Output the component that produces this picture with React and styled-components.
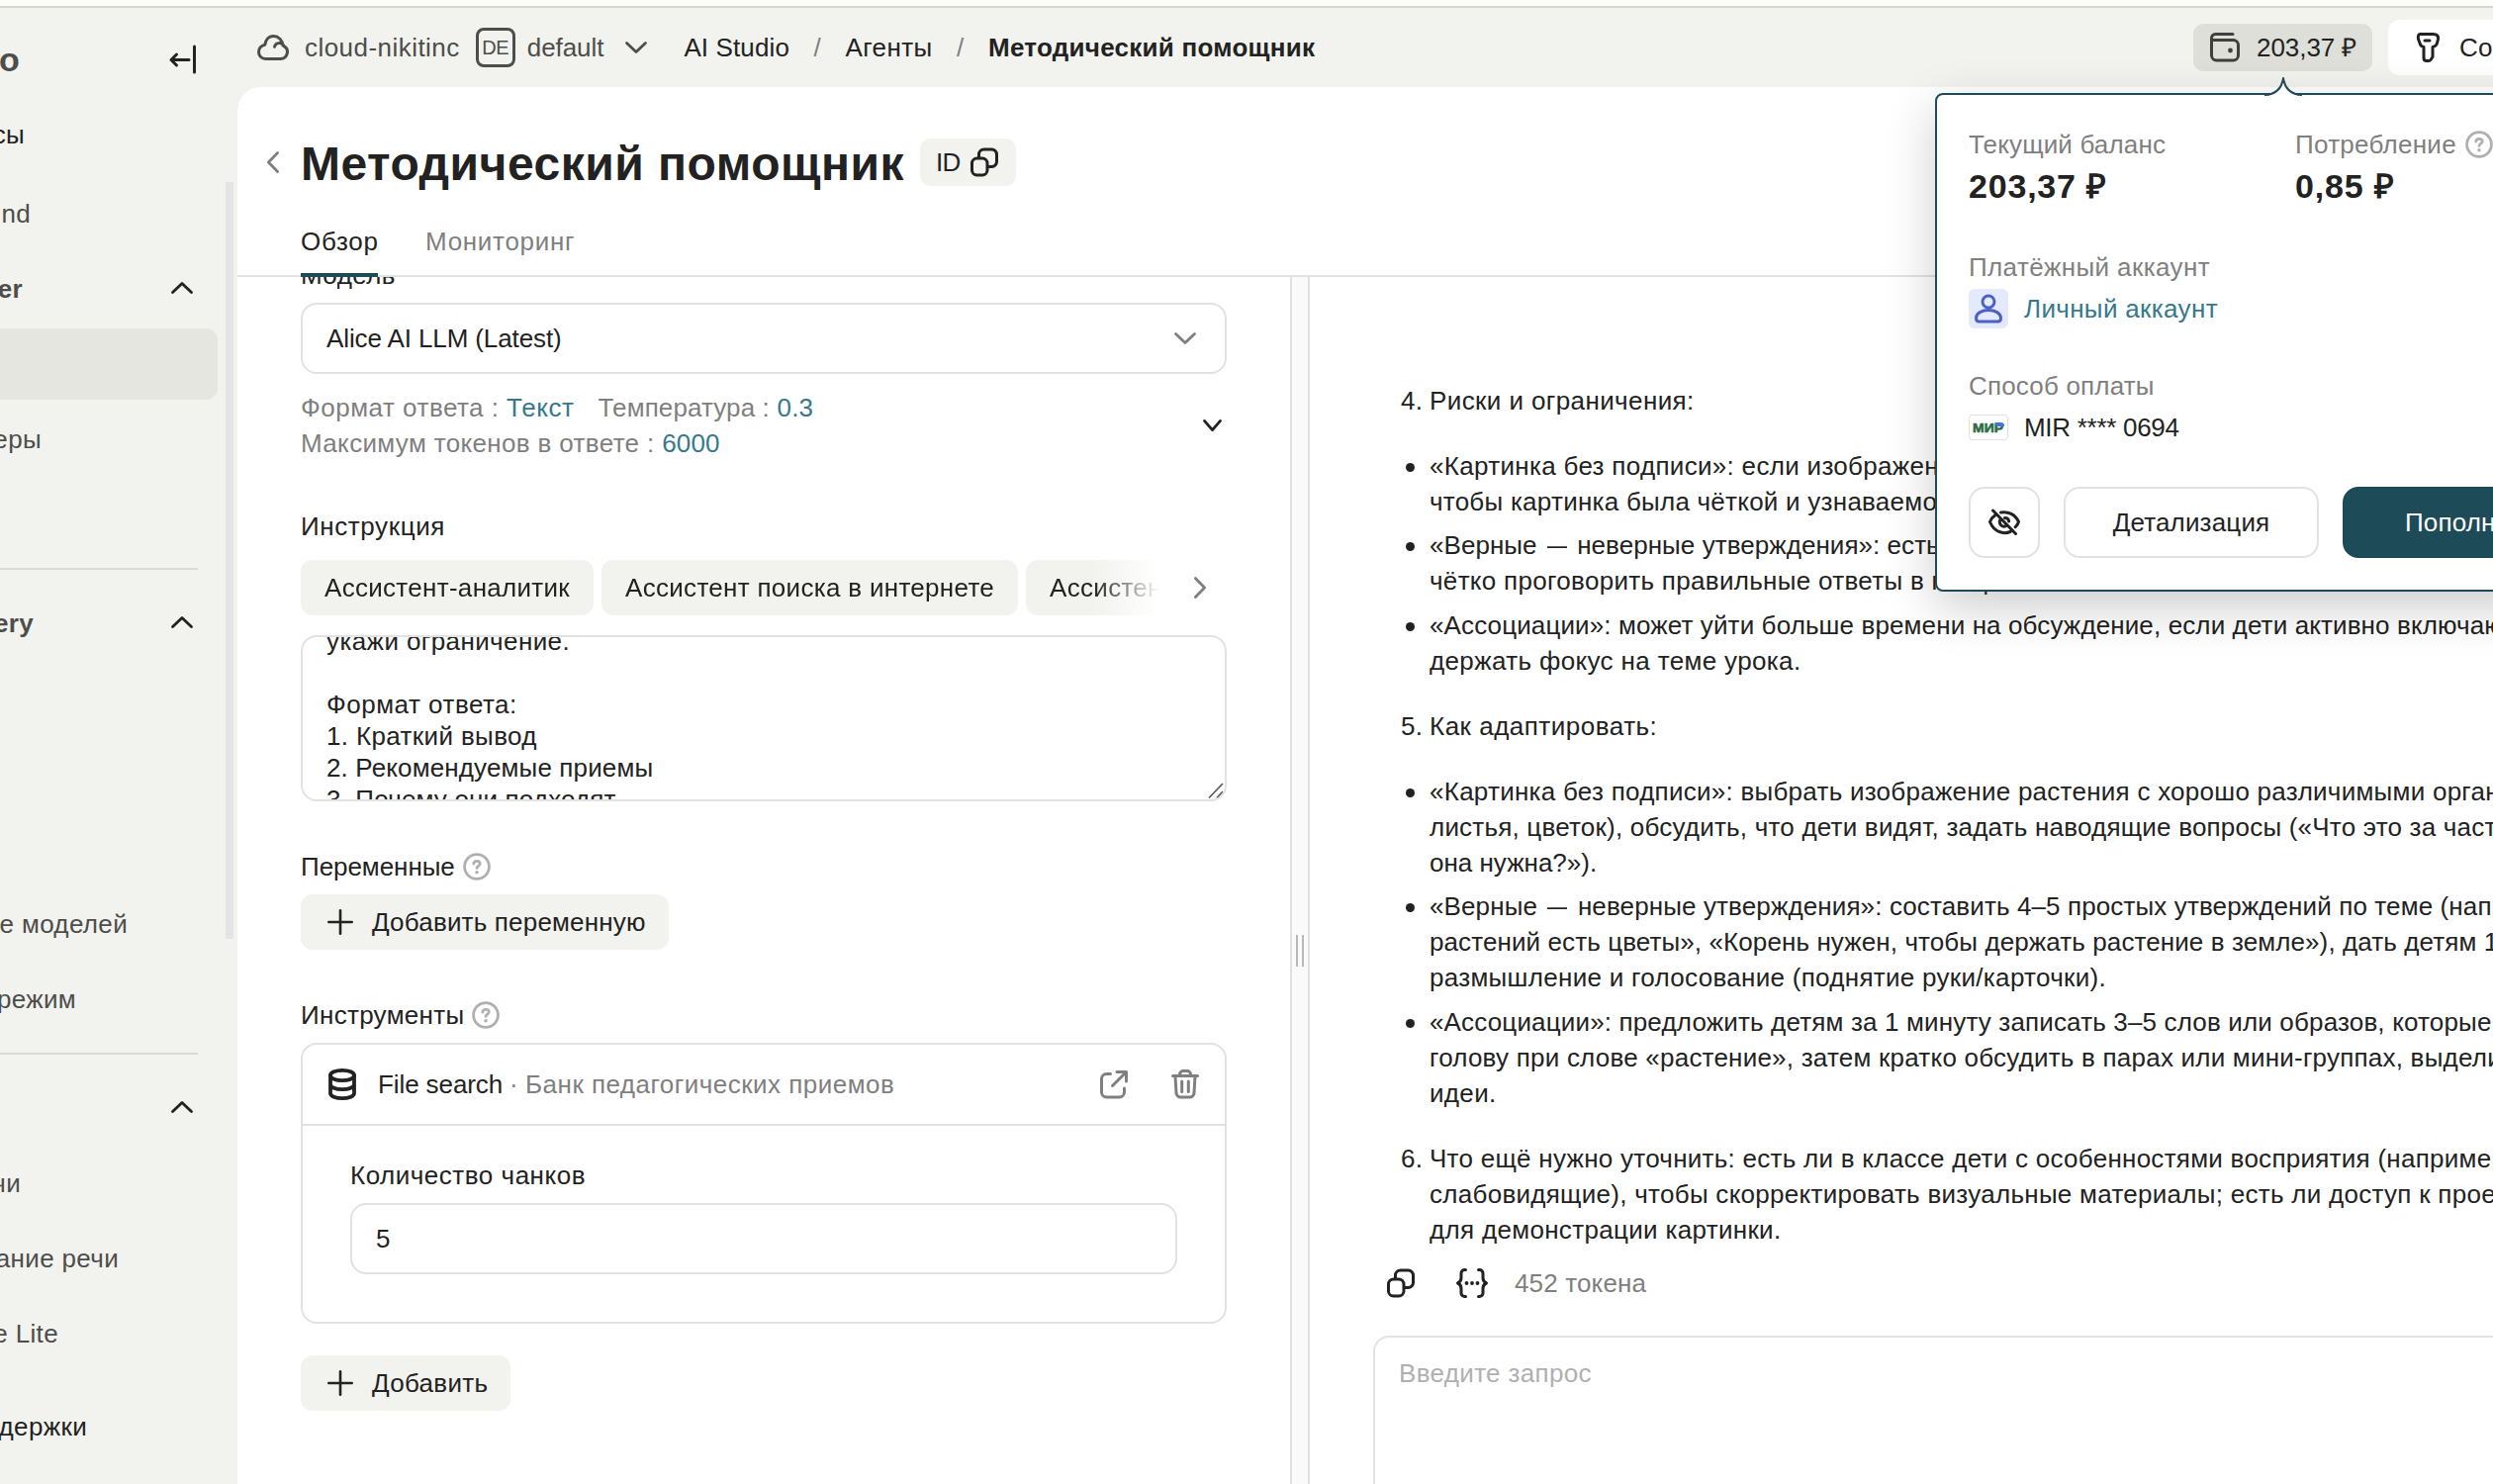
import React from "react";
import styled, { createGlobalStyle, css } from "styled-components";

const GlobalStyle = createGlobalStyle`
    * {
        box-sizing: border-box;
    }
    body {
        margin: 0;
        overflow: hidden;
        background: #f2f3ee;
        color: #222222;
        font-family: "Liberation Sans", Arial, sans-serif;
        font-size: 26px;
        line-height: 36px;
        letter-spacing: 0.34px;
    }
    svg {
        display: block;
        flex: none;
        overflow: visible;
    }
`;

// Icons
const Icon = ({ size = 32, color = "currentColor", stroke = 3, children }) => (
    <svg width={size} height={size} viewBox="0 0 32 32" fill="none" stroke={color} strokeWidth={stroke} strokeLinecap="round" strokeLinejoin="round">
        {children}
    </svg>
);

const Chevron = ({ dir = "down", size = 20, color = "currentColor", stroke = 2.8 }) => {
    const turn = { down: 0, left: 90, up: 180, right: 270 }[dir];
    const side = dir === "left" || dir === "right";
    const w = side ? 12 : size;
    const h = side ? size : 12;
    const half = (size - 3) / 2;
    return (
        <svg width={w} height={h} viewBox={`${-w / 2} ${-h / 2} ${w} ${h}`} fill="none" stroke={color} strokeWidth={stroke} strokeLinecap="round" strokeLinejoin="round">
            <path transform={`rotate(${turn})`} d={`M${-half} -4.6 L0 4.6 L${half} -4.6`} />
        </svg>
    );
};

const CopyIcon = () => (
    <Icon>
        <rect x="3.5" y="12" width="15.5" height="17" rx="5" />
        <path d="M10.5 11.5V8a5 5 0 0 1 5-5h8a5 5 0 0 1 5 5v7.500a5 5 0 0 1-5 5h-4" />
    </Icon>
);

const HelpIcon = () => (
    <Icon size={28} color="#b0b0b0" stroke={3.2}>
        <circle cx="16" cy="16" r="14.2" />
        <path d="M12.3 12.6c.2-2 1.7-3.1 3.7-3.1s3.7 1.200 3.700 3.100c0 2.700-3.700 2.700-3.700 5" />
        <circle cx="16" cy="22.600" r="2" fill="#b0b0b0" stroke="none" />
    </Icon>
);

const PlusIcon = () => (
    <Icon size={26} stroke={3.2}>
        <path d="M16 1.600v28.800M1.600 16h28.800" />
    </Icon>
);

// Data: every line is [text, letter spacing]
const replyBlocks = [
    {
        marker: "4.",
        title: [["Риски и ограничения:", 0.4]],
        items: [
            [["«Картинка без подписи»: если изображение нечёткое,", 0.31], ["чтобы картинка была чёткой и узнаваемой.", 0.25]],
            [["«Верные — неверные утверждения»: есть риск,", 0.05], ["чётко проговорить правильные ответы в конце.", 0.31]],
            [["«Ассоциации»: может уйти больше времени на обсуждение, если дети активно включаются,", 0.12], ["держать фокус на теме урока.", 0.36]]
        ]
    },
    {
        marker: "5.",
        title: [["Как адаптировать:", 0.5]],
        items: [
            [["«Картинка без подписи»: выбрать изображение растения с хорошо различимыми органами", 0.26], ["листья, цветок), обсудить, что дети видят, задать наводящие вопросы («Что это за часть", 0.21], ["она нужна?»).", 0]],
            [["«Верные — неверные утверждения»: составить 4–5 простых утверждений по теме (например,", 0.12], ["растений есть цветы», «Корень нужен, чтобы держать растение в земле»), дать детям 1", 0.1], ["размышление и голосование (поднятие руки/карточки).", 0.3]],
            [["«Ассоциации»: предложить детям за 1 минуту записать 3–5 слов или образов, которые", 0.16], ["голову при слове «растение», затем кратко обсудить в парах или мини-группах, выделить", 0.22], ["идеи.", 0.33]]
        ]
    },
    {
        marker: "6.",
        title: [["Что ещё нужно уточнить: есть ли в классе дети с особенностями восприятия (например,", 0.27], ["слабовидящие), чтобы скорректировать визуальные материалы; есть ли доступ к проектору", 0.28], ["для демонстрации картинки.", 0.32]],
        items: []
    }
];

const Lines = ({ rows }) => rows.map(([text, track]) => {
    const [before, after] = text.split("—");
    return (
        <Line key={text} $track={track}>
            {before}
            {after && <Dash>—</Dash>}
            {after}
        </Line>
    );
});

const Sidebar = () => (
    <SidebarWrap>
        <SidebarHead>
            <Logo $edge={20}>o</Logo>
            <svg width="27" height="30" viewBox="0 0 27 30" fill="none" stroke="#222222" strokeWidth="3" strokeLinecap="round" strokeLinejoin="round">
                <path d="M20 15.500H2M7.500 10l-5.500 5.500 5.500 5.500M25.500 2v26" />
            </svg>
        </SidebarHead>
        <SideRow>
            <SideText $edge={25} $dark>сы</SideText>
        </SideRow>
        <SideScroll>
            <SideNav>
                <SideRow>
                    <SideText $edge={31}>nd</SideText>
                </SideRow>
                <SideRow>
                    <SideText $edge={23} $bold>er</SideText>
                    <Chevron dir="up" size={22} />
                </SideRow>
                <SideRow $active />
                <SideRow>
                    <SideText $edge={42}>еры</SideText>
                </SideRow>
                <SideRow />
                <SideDivider />
                <SideRow>
                    <SideText $edge={34} $bold>ery</SideText>
                    <Chevron dir="up" size={22} />
                </SideRow>
                <SideRow />
                <SideRow />
                <SideRow />
                <SideRow>
                    <SideText $edge={129}>е моделей</SideText>
                </SideRow>
                <SideRow>
                    <SideText $edge={77}>режим</SideText>
                </SideRow>
                <SideDivider />
                <SideRow>
                    <SideText $edge={0} />
                    <Chevron dir="up" size={22} />
                </SideRow>
                <SideRow>
                    <SideText $edge={21}>чи</SideText>
                </SideRow>
                <SideRow>
                    <SideText $edge={120}>ание речи</SideText>
                </SideRow>
                <SideRow>
                    <SideText $edge={59}>е Lite</SideText>
                </SideRow>
                <SideFooter>
                    <SideText $edge={88} $dark>держки</SideText>
                </SideFooter>
            </SideNav>
            <ScrollThumb />
        </SideScroll>
    </SidebarWrap>
);

const Header = () => (
    <HeaderBar>
        <Cloud>
            <svg width="32" height="26" viewBox="0 0 32 26" fill="none" stroke="#4d4d4b" strokeWidth="3" strokeLinecap="round" strokeLinejoin="round">
                <path d="M8.500 24.500h15a7 7 0 0 0 3.200-13.200c-.200-1.800-2.700-3.200-5.200-2.700-2.200.4-3.600 1.700-4 3.600M26 11C25.500 5.500 21.500 1.500 16.500 1.500 11.500 1.500 8.500 5.500 7.800 10.200 4 11 1.500 14 1.500 17.500a7 7 0 0 0 7 7" />
            </svg>
            <Text $track={0.46}>cloud-nikitinc</Text>
        </Cloud>
        <Folder>
            <FolderBadge>DE</FolderBadge>
            <Text $track={-0.06}>default</Text>
        </Folder>
        <Chevron size={22} color="#4d4d4b" />
        <Crumbs>
            <Text $track={0.12}>AI Studio</Text>
            <Slash>/</Slash>
            <Text $track={0.4}>Агенты</Text>
            <Slash>/</Slash>
            <Current>Методический помощник</Current>
        </Crumbs>
        <HeaderActions>
            <BalanceButton>
                <Icon color="#3f3f3d">
                    <path d="M2.500 7v17a5 5 0 0 0 5 5h17a5 5 0 0 0 5-5V13.500a5 5 0 0 0-5-5H4.500a2 2 0 0 1-2-2c0-2 1.500-4 4-4H24" />
                    <circle cx="21.500" cy="19" r="2.400" fill="#3f3f3d" stroke="none" />
                </Icon>
                <Text $track={-0.04}>203,37 ₽</Text>
            </BalanceButton>
            <CreateButton>
                <Icon>
                    <path d="M9.500 2.500h13c4 0 5.500 2 5 5l-1 4c-.6 2.500-2 3.500-4.500 4V25.500l-2 3c-.5.700-1 1-2 1h-2c-2 0-3-1-3-3V15.500c-2.500-.5-3.500-1.500-4-4l-1.500-4c-.7-3 .3-5 2-5ZM14 9h5" transform="translate(-1 0)" />
                </Icon>
                <span>Создать</span>
            </CreateButton>
        </HeaderActions>
    </HeaderBar>
);

const Settings = () => (
    <SettingsColumn>
        <Label>Модель</Label>
        <Select>
            <Text $track={-0.11}>Alice AI LLM (Latest)</Text>
            <Chevron size={22} color="#7f7f7f" />
        </Select>
        <Params>
            <div>
                <ParamLine>
                    <Param $track={0.5}>Формат ответа :</Param> <ParamValue $track={0.6}>Текст</ParamValue>
                    <Param $track={0.11} $gap>Температура :</Param> <ParamValue>0.3</ParamValue>
                </ParamLine>
                <ParamLine>
                    <Param $track={0.35}>Максимум токенов в ответе :</Param> <ParamValue>6000</ParamValue>
                </ParamLine>
            </div>
            <Chevron size={19} />
        </Params>
        <Label $top={48} $track={0.6}>Инструкция</Label>
        <ChipRow>
            <ChipStrip>
                <Chip>Ассистент-аналитик</Chip>
                <Chip>Ассистент поиска в интернете</Chip>
                <Chip>Ассистент</Chip>
            </ChipStrip>
            <Chevron dir="right" size={22} color="#7f7f7f" />
        </ChipRow>
        <Instruction>
            <InstructionText>
                <Text $track={0.4}>укажи ограничение.</Text>
                <br />
                <br />
                <Text $track={0.5}>Формат ответа:</Text>
                <br />
                <Text $track={0.36}>1. Краткий вывод</Text>
                <br />
                <Text $track={0.14}>2. Рекомендуемые приемы</Text>
                <br />
                <Text $track={0.15}>3. Почему они подходят</Text>
            </InstructionText>
            <Grip width="16" height="16" viewBox="0 0 16 16" fill="none" stroke="#555555" strokeWidth="1.600">
                <path d="M1 15.500L15 1M9 15.500L15 9" />
            </Grip>
        </Instruction>
        <Label $top={48} $track={-0.05}>
            Переменные
            <HelpIcon />
        </Label>
        <AddButton $top={10}>
            <PlusIcon />
            <Text $track={0.19}>Добавить переменную</Text>
        </AddButton>
        <Label $top={48} $track={0.3}>
            Инструменты
            <HelpIcon />
        </Label>
        <Card>
            <CardHead>
                <Icon stroke={3.8}>
                    <ellipse cx="16" cy="7" rx="12" ry="5.200" />
                    <path d="M4 7v18c0 3 5.400 5.200 12 5.200S28 28 28 25V7M4 16c0 3 5.400 5.200 12 5.200S28 19 28 16" />
                </Icon>
                <ToolName>
                    <Text $track={-0.1}>File search</Text>
                    <Dot>·</Dot>
                    <Muted $track={0.48}>Банк педагогических приемов</Muted>
                </ToolName>
                <ToolActions>
                    <Icon color="#7f7f7f">
                        <path d="M12.500 5.500H8.500a5 5 0 0 0-5 5v13.500a5 5 0 0 0 5 5h13a5 5 0 0 0 5-5v-4M19 3.500h9.500v9.500M28 4L14.500 17.500" />
                    </Icon>
                    <Icon color="#7f7f7f">
                        <path d="M3.500 7.500h25M10.500 7V6a3.500 3.500 0 0 1 3.500-3.500h4A3.500 3.500 0 0 1 21.500 6v1M6 8l1 17a4.500 4.500 0 0 0 4.500 4h9a4.500 4.500 0 0 0 4.500-4l1-17M12.700 13v10.500M19.300 13v10.500" />
                    </Icon>
                </ToolActions>
            </CardHead>
            <CardBody>
                <Label $track={0.52}>Количество чанков</Label>
                <NumberInput>5</NumberInput>
            </CardBody>
        </Card>
        <AddButton $top={32}>
            <PlusIcon />
            <Text $track={0.3}>Добавить</Text>
        </AddButton>
    </SettingsColumn>
);

const Chat = () => (
    <ChatColumn>
        {replyBlocks.map((block) => (
            <Block key={block.marker}>
                <Entry>
                    <span>{block.marker}</span>
                    <div>
                        <Lines rows={block.title} />
                    </div>
                </Entry>
                {block.items.length > 0 && (
                    <Bullets>
                        {block.items.map((item) => (
                            <Entry key={item[0][0]}>
                                <Bullet />
                                <div>
                                    <Lines rows={item} />
                                </div>
                            </Entry>
                        ))}
                    </Bullets>
                )}
            </Block>
        ))}
        <ReplyActions>
            <CopyIcon />
            <Icon>
                <path d="M9.500 2.500H8.500a3.500 3.500 0 0 0-3.500 3.500v4.500c0 3-1 4.500-3.500 5.500 2.500 1 3.500 2.500 3.500 5.500V26a3.500 3.500 0 0 0 3.500 3.500h1M22.500 2.500h1A3.500 3.500 0 0 1 27 6v4.500c0 3 1 4.500 3.500 5.500-2.500 1-3.500 2.500-3.500 5.500V26a3.500 3.500 0 0 1-3.500 3.500h-1" />
                <path d="M10.500 16h.010M16 16h.010M21.500 16h.010" strokeWidth="3.800" />
            </Icon>
            <Muted $track={0.15}>452 токена</Muted>
        </ReplyActions>
        <Prompt>Введите запрос</Prompt>
    </ChatColumn>
);

const BalancePopover = () => (
    <Popover>
        <Arrow width="40" height="22" viewBox="0 0 40 22">
            <path d="M0 20H40V22H0Z" fill="#ffffff" />
            <path d="M1 19C13 18.500 18.500 12 20 2C21.500 12 27 18.500 39 19V21.500H1Z" fill="#ffffff" />
            <path d="M1 19C13 18.500 18.500 12 20 2C21.500 12 27 18.500 39 19" fill="none" stroke="#1e4b58" strokeWidth="2" strokeLinejoin="round" />
        </Arrow>
        <Totals>
            <div>
                <Muted $track={0.15}>Текущий баланс</Muted>
                <Amount>203,37 ₽</Amount>
            </div>
            <div>
                <Muted $track={0.28}>
                    Потребление
                    <HelpIcon />
                </Muted>
                <Amount>0,85 ₽</Amount>
            </div>
        </Totals>
        <Section $top={42}>
            <Muted $track={0.38}>Платёжный аккаунт</Muted>
            <SectionRow $link>
                <AccountBadge>
                    <Icon color="#4a62c4">
                        <circle cx="16" cy="9" r="6" />
                        <path d="M3.500 25.500c0-5 6-8 12.500-8s12.500 3 12.500 8c0 2.500-1 3.500-3 3.500h-19c-2 0-3-1-3-3.500Z" />
                    </Icon>
                </AccountBadge>
                <span>Личный аккаунт</span>
            </SectionRow>
        </Section>
        <Section $top={40}>
            <Muted $track={0.18}>Способ оплаты</Muted>
            <SectionRow>
                <CardBadge>
                    <svg width="32" height="12" viewBox="0 0 32 12">
                        <text x="0" y="10.500" fontFamily="Liberation Sans, sans-serif" fontWeight="700" fontSize="13" letterSpacing="0" textLength="31" lengthAdjust="spacingAndGlyphs" fill="#2d6b46" stroke="#2d6b46" strokeWidth="0.600">МИР</text>
                        <path d="M22.500 1H28.500C31 1 32.500 2.800 31.800 5H26.500C24.500 5 23 3.500 22.500 1Z" fill="#3b78e0" />
                    </svg>
                </CardBadge>
                <Text $track={-0.29}>MIR **** 0694</Text>
            </SectionRow>
        </Section>
        <PopoverButtons>
            <Button $width={72}>
                <Icon>
                    <path d="M4.500 4L27.500 27.500M12.500 6C20 4.500 27 8 30.500 15.500C29.800 17.500 28.600 19.300 27.200 20.700M7 8.500C4.500 10.300 2.600 12.600 1.500 15.500C5.500 25.500 15 28.500 22 25.500M16.500 11.500C19 11.500 20.500 13 20.700 15M11.800 13.500C10 17.500 14 21.700 18 19.500" />
                </Icon>
            </Button>
            <Button $width={258}>Детализация</Button>
            <Button $width={258} $primary>Пополнить</Button>
        </PopoverButtons>
    </Popover>
);

const App = () => (
    <>
        <GlobalStyle />
        <Page>
            <TopStrip />
            <Shell>
                <Sidebar />
                <Main>
                    <Header />
                    <Panel>
                        <PanelHead>
                            <TitleRow>
                                <Chevron dir="left" size={22} color="#7f7f7f" />
                                <Title>Методический помощник</Title>
                                <IdBadge>
                                    <Text $track={-0.7}>ID</Text>
                                    <CopyIcon />
                                </IdBadge>
                            </TitleRow>
                            <Tabs>
                                <Tab $active>Обзор</Tab>
                                <Tab>Мониторинг</Tab>
                            </Tabs>
                        </PanelHead>
                        <Content>
                            <Settings />
                            <Splitter>
                                <SplitterHandle />
                            </Splitter>
                            <Chat />
                        </Content>
                    </Panel>
                </Main>
            </Shell>
            <BalancePopover />
        </Page>
    </>
);

// Shell
const Page = styled.div`
    position: relative;
    display: flex;
    flex-direction: column;
    width: 100vw;
    height: 100vh;
    overflow: hidden;
`;

const TopStrip = styled.div`
    flex: none;
    height: 8px;
    background: #fffefa;
    border-bottom: 2px solid #d6d7cd;
`;

const Shell = styled.div`
    flex: 1;
    min-height: 0;
    display: grid;
    grid-template-columns: 240px minmax(0, 1fr);
`;

const Main = styled.div`
    display: flex;
    flex-direction: column;
    min-height: 0;
`;

const Text = styled.span`
    white-space: pre;
    letter-spacing: ${(p) => p.$track ?? 0.34}px;
`;

const Muted = styled.div`
    display: flex;
    align-items: center;
    gap: 9px;
    color: #7f7f7f;
    white-space: pre;
    letter-spacing: ${(p) => p.$track ?? 0.34}px;
`;

// Sidebar
const SidebarWrap = styled.aside`
    display: flex;
    flex-direction: column;
    min-height: 0;
    overflow: hidden;
`;

const SidebarHead = styled.div`
    display: flex;
    align-items: center;
    justify-content: space-between;
    height: 90px;
    padding: 13px 42px 0 0;
`;

const Logo = styled.div`
    display: flex;
    justify-content: flex-end;
    width: ${(p) => p.$edge}px;
    color: #4d4d4b;
    font-size: 34px;
    font-weight: 700;
`;

const SideScroll = styled.div`
    flex: 1;
    min-height: 0;
    display: flex;
    justify-content: space-between;
    padding: 4px 4px 0 0;
`;

const SideNav = styled.nav`
    width: 220px;
`;

const SideRow = styled.div`
    display: flex;
    align-items: center;
    justify-content: space-between;
    height: 76px;
    padding-right: 25px;

    svg {
        margin-top: -3px;
    }
    ${(p) => p.$active && css`
        height: 72px;
        margin: 2px 0;
        border-radius: 0 12px 12px 0;
        background: #e5e6e0;
    `}
`;

const SideText = styled.span`
    display: flex;
    justify-content: flex-end;
    width: ${(p) => p.$edge}px;
    white-space: pre;
    color: ${(p) => (p.$dark ? "#222222" : "#4d4d4b")};
    font-weight: ${(p) => (p.$bold ? 700 : 400)};
`;

const SideDivider = styled.div`
    width: 200px;
    height: 2px;
    margin: 16px 0;
    background: #d9dad4;
`;

const SideFooter = styled(SideRow)`
    margin-top: 18px;
`;

const ScrollThumb = styled.div`
    width: 8px;
    height: 765px;
    margin-top: 6px;
    background: #e4e4e4;
`;

// Header
const HeaderBar = styled.header`
    display: flex;
    align-items: center;
    flex: none;
    height: 80px;
    padding-left: 20px;
    white-space: nowrap;
`;

const Cloud = styled.div`
    display: flex;
    align-items: center;
    gap: 16px;
    color: #4d4d4b;
`;

const Folder = styled.div`
    display: flex;
    align-items: center;
    gap: 12px;
    margin: 0 22px 0 16px;
    color: #4d4d4b;
`;

const FolderBadge = styled.span`
    display: flex;
    align-items: center;
    justify-content: center;
    width: 40px;
    height: 40px;
    border: 3px solid #4d4d4b;
    border-radius: 8px;
    font-size: 20px;
    letter-spacing: -0.4px;
`;

const Crumbs = styled.div`
    display: flex;
    margin-left: 37px;
`;

const Slash = styled.span`
    width: 56.5px;
    color: #7f7f7f;
    text-align: center;
`;

const Current = styled.span`
    font-weight: 700;
    letter-spacing: 0.26px;
`;

const HeaderActions = styled.div`
    display: flex;
    align-items: center;
    gap: 16px;
    margin-left: auto;
`;

const BalanceButton = styled.div`
    display: flex;
    align-items: center;
    gap: 16px;
    width: 181px;
    height: 48px;
    padding-left: 16px;
    border-radius: 10px;
    background: #dedfd9;
`;

const CreateButton = styled.div`
    display: flex;
    align-items: center;
    gap: 16px;
    width: 106px;
    height: 56px;
    padding-left: 24px;
    overflow: hidden;
    border-radius: 12px 0 0 12px;
    background: #ffffff;
`;

// Panel
const Panel = styled.main`
    flex: 1;
    display: flex;
    flex-direction: column;
    min-height: 0;
    overflow: hidden;
    border-top-left-radius: 24px;
    background: #ffffff;
`;

const PanelHead = styled.div`
    flex: none;
    padding-top: 44px;
    border-bottom: 2px solid #e2e2e2;
`;

const TitleRow = styled.div`
    display: flex;
    align-items: center;
    height: 64px;
    padding-left: 30px;
`;

const Title = styled.h1`
    margin: 3px 16px 0 22px;
    font-size: 48px;
    font-weight: 700;
    line-height: 60px;
    letter-spacing: 0.5px;
`;

const IdBadge = styled.div`
    display: flex;
    align-items: center;
    gap: 8px;
    width: 97px;
    height: 48px;
    padding-left: 16px;
    border-radius: 10px;
    background: #f2f3ee;
`;

const Tabs = styled.div`
    display: flex;
    gap: 48px;
    height: 72px;
    margin: 12px 0 -2px 64px;
`;

const Tab = styled.div`
    display: flex;
    align-items: center;
    color: ${(p) => (p.$active ? "#222222" : "#7f7f7f")};
    letter-spacing: 0.7px;
    ${(p) => p.$active && css`
        width: 78px;
        box-shadow: inset 0 -4px 0 #1e4b58;
    `}
`;

const Content = styled.div`
    flex: 1;
    min-height: 0;
    display: grid;
    grid-template-columns: 1064px 20px minmax(0, 1fr);
`;

// Settings column
const SettingsColumn = styled.section`
    min-height: 0;
    overflow: hidden;
    padding: 0 64px;

    > :first-child {
        margin-top: -20px;
    }
`;

const Label = styled.div`
    display: flex;
    align-items: center;
    gap: 8px;
    margin-top: ${(p) => p.$top ?? 0}px;
    letter-spacing: ${(p) => p.$track ?? 0.4}px;
`;

const Field = styled.div`
    display: flex;
    align-items: center;
    justify-content: space-between;
    height: 72px;
    margin-top: 10px;
    border: 2px solid #e2e2e2;
    border-radius: 16px;
`;

const Select = styled(Field)`
    padding: 0 29px 0 24px;
`;

const NumberInput = styled(Field)`
    padding: 0 24px;
`;

const Params = styled.div`
    display: flex;
    align-items: center;
    justify-content: space-between;
    margin-top: 16px;
    padding-right: 5px;
`;

const ParamLine = styled.div`
    white-space: pre;
`;

const Param = styled.span`
    margin-left: ${(p) => (p.$gap ? 24 : 0)}px;
    color: #7f7f7f;
    letter-spacing: ${(p) => p.$track}px;
`;

const ParamValue = styled.span`
    color: #35798c;
    letter-spacing: ${(p) => p.$track ?? 0.2}px;
`;

const ChipRow = styled.div`
    display: flex;
    align-items: center;
    justify-content: space-between;
    margin-top: 16px;
    padding-right: 21px;
`;

const ChipStrip = styled.div`
    display: flex;
    gap: 8px;
    width: 868px;
    overflow: hidden;
    mask-image: linear-gradient(to right, #000 802px, transparent 868px);
`;

const Chip = styled.div`
    flex: none;
    height: 56px;
    padding: 0 24px;
    border-radius: 12px;
    background: #f2f3ee;
    line-height: 56px;
    white-space: nowrap;
    letter-spacing: 0.3px;
`;

const Instruction = styled.div`
    position: relative;
    height: 168px;
    margin-top: 20px;
    overflow: hidden;
    border: 2px solid #e2e2e2;
    border-radius: 16px;
`;

const InstructionText = styled.div`
    margin: -12px 0 0 24px;
    line-height: 32px;
`;

const Grip = styled.svg`
    position: absolute;
    right: 1px;
    bottom: 1px;
`;

const AddButton = styled.div`
    display: flex;
    align-items: center;
    gap: 19px;
    width: fit-content;
    height: 56px;
    margin-top: ${(p) => p.$top}px;
    padding: 0 23px 0 27px;
    border-radius: 12px;
    background: #f2f3ee;
`;

const Card = styled.div`
    height: 284px;
    margin-top: 10px;
    border: 2px solid #e2e2e2;
    border-radius: 16px;
`;

const CardHead = styled.div`
    display: flex;
    align-items: center;
    height: 82px;
    padding: 0 24px;
    border-bottom: 2px solid #e2e2e2;
`;

const ToolName = styled.div`
    display: flex;
    margin-left: 20px;
`;

const Dot = styled.span`
    width: 23px;
    color: #7f7f7f;
    text-align: center;
`;

const ToolActions = styled.div`
    display: flex;
    gap: 40px;
    margin-left: auto;
`;

const CardBody = styled.div`
    padding: 32px 48px 0 48px;
`;

// Chat column
const Splitter = styled.div`
    display: flex;
    align-items: center;
    justify-content: center;
    border: solid #e0e0e0;
    border-width: 0 2px;
    background: #fafafa;
`;

const SplitterHandle = styled.div`
    width: 8px;
    height: 32px;
    margin-top: 142px;
    border: solid #b8b8b8;
    border-width: 0 2px;
`;

const ChatColumn = styled.section`
    min-height: 0;
    overflow: hidden;
    padding: 107px 0 0 64px;
`;

const Block = styled.div`
    margin: 0 0 30px 28px;
`;

const Entry = styled.div`
    display: grid;
    grid-template-columns: 29px minmax(0, 1fr);
`;

const Bullets = styled.div`
    display: flex;
    flex-direction: column;
    gap: 8.4px;
    margin-top: 30px;
`;

const Bullet = styled.span`
    width: 9px;
    height: 9px;
    margin: 15px 0 0 5px;
    border-radius: 50%;
    background: #222222;
`;

const Line = styled.div`
    white-space: nowrap;
    letter-spacing: ${(p) => p.$track}px;
`;

const Dash = styled.span`
    display: inline-block;
    transform: scaleX(0.77);
`;

const ReplyActions = styled.div`
    display: flex;
    align-items: center;
    gap: 40px;
    margin: -12px 0 0 12px;

    ${Muted} {
        margin-left: -13px;
    }
`;

const Prompt = styled.div`
    height: 200px;
    margin-top: 35px;
    padding: 18px 24px;
    border: 2px solid #e2e2e2;
    border-right: none;
    border-top-left-radius: 16px;
    color: #b0b0b0;
`;

// Balance popover
const Popover = styled.div`
    position: absolute;
    top: 94px;
    left: 1956px;
    width: 640px;
    height: 504px;
    padding: 32px;
    border: 2px solid #1e4b58;
    border-radius: 8px;
    background: #ffffff;
    box-shadow: 0 16px 52px rgba(0, 0, 0, 0.2);
`;

const Arrow = styled.svg`
    position: absolute;
    top: -19px;
    left: 330px;
`;

const Totals = styled.div`
    display: grid;
    grid-template-columns: 330px minmax(0, 1fr);
`;

const Amount = styled.div`
    margin-top: 2px;
    font-size: 34px;
    font-weight: 700;
    line-height: 44px;
    letter-spacing: 0.8px;
`;

const Section = styled.div`
    margin-top: ${(p) => p.$top}px;
`;

const SectionRow = styled.div`
    display: flex;
    align-items: center;
    gap: 16px;
    height: 40px;
    margin-top: 4px;
    color: ${(p) => (p.$link ? "#35798c" : "inherit")};
`;

const AccountBadge = styled.span`
    display: flex;
    align-items: center;
    justify-content: center;
    width: 40px;
    height: 40px;
    border-radius: 6px;
    background: #e5e9fd;
`;

const CardBadge = styled.span`
    display: flex;
    align-items: center;
    justify-content: center;
    width: 40px;
    height: 26px;
    border: 1px solid #e0e0e0;
    border-radius: 4px;
`;

const PopoverButtons = styled.div`
    display: flex;
    gap: 24px;
    margin-top: 40px;
`;

const Button = styled.div`
    display: flex;
    align-items: center;
    justify-content: center;
    flex: none;
    width: ${(p) => p.$width}px;
    height: 72px;
    border: 2px solid ${(p) => (p.$primary ? "#1e4b58" : "#e2e2e2")};
    border-radius: 16px;
    background: ${(p) => (p.$primary ? "#1e4b58" : "#ffffff")};
    color: ${(p) => (p.$primary ? "#ffffff" : "#222222")};
    letter-spacing: 0.17px;
`;

export default App;
